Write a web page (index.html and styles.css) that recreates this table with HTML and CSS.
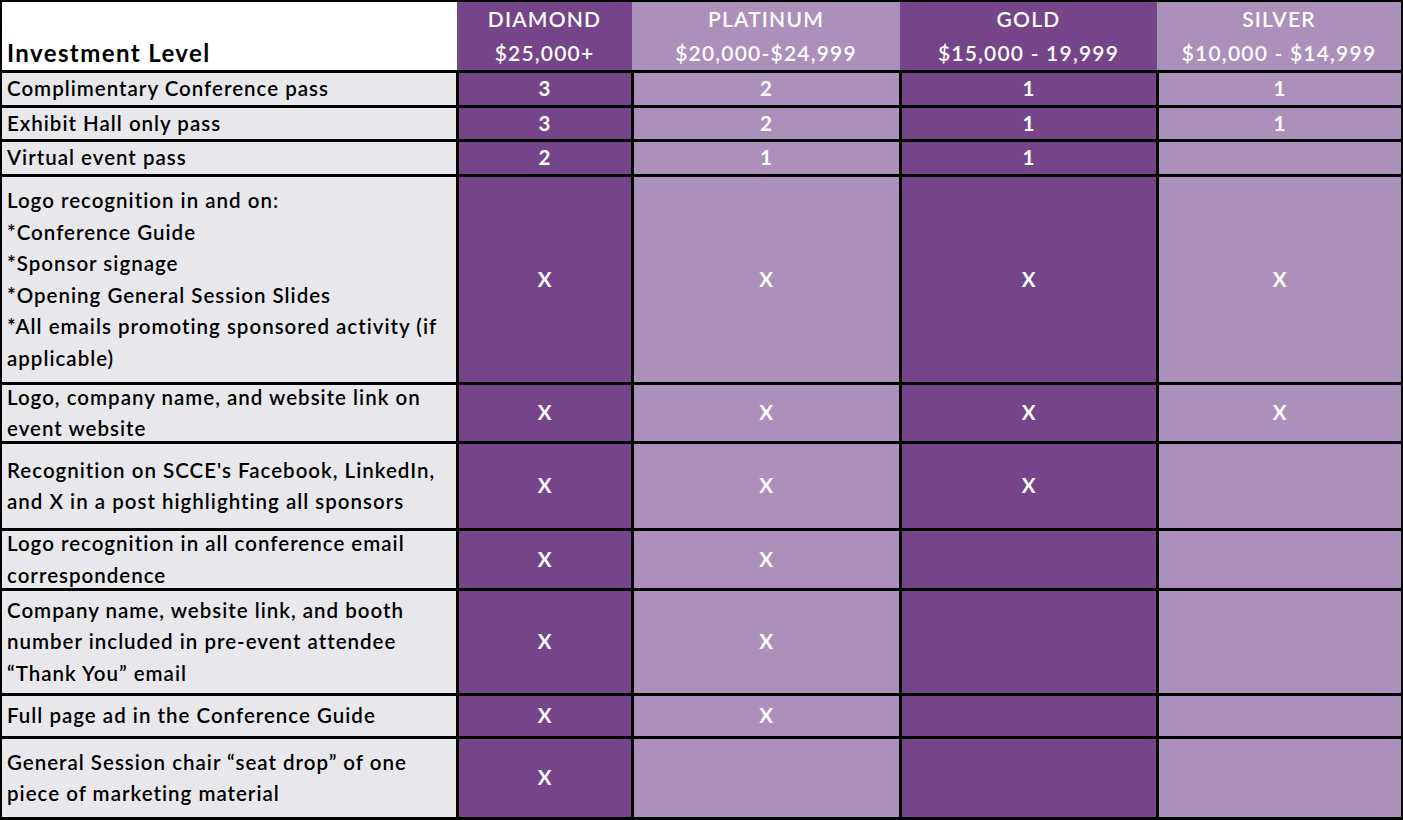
FILE: index.html
```html
<!DOCTYPE html>
<html lang="en">
<head>
<meta charset="utf-8">
<title>Sponsorship Levels</title>
<link rel="stylesheet" href="styles.css">
</head>
<body>
<div class="sheet">
  <div class="row head">
    <div class="cell title">Investment Level</div>
    <div class="cell tier dark"><span>DIAMOND</span><span>$25,000+</span></div>
    <div class="cell tier light"><span>PLATINUM</span><span>$20,000-$24,999</span></div>
    <div class="cell tier dark"><span>GOLD</span><span>$15,000 - 19,999</span></div>
    <div class="cell tier light"><span>SILVER</span><span>$10,000 - $14,999</span></div>
  </div>

  <div class="row h32">
    <div class="cell label">Complimentary Conference pass</div>
    <div class="cell val dark">3</div>
    <div class="cell val light">2</div>
    <div class="cell val dark">1</div>
    <div class="cell val light">1</div>
  </div>

  <div class="row h31">
    <div class="cell label">Exhibit Hall only pass</div>
    <div class="cell val dark">3</div>
    <div class="cell val light">2</div>
    <div class="cell val dark">1</div>
    <div class="cell val light">1</div>
  </div>

  <div class="row h32">
    <div class="cell label">Virtual event pass</div>
    <div class="cell val dark">2</div>
    <div class="cell val light">1</div>
    <div class="cell val dark">1</div>
    <div class="cell val light"></div>
  </div>

  <div class="row h205">
    <div class="cell label">Logo recognition in and on:<br>*Conference Guide<br>*Sponsor signage<br>*Opening General Session Slides<br>*All emails promoting sponsored activity (if<br>applicable)</div>
    <div class="cell val dark">X</div>
    <div class="cell val light">X</div>
    <div class="cell val dark">X</div>
    <div class="cell val light">X</div>
  </div>

  <div class="row h56">
    <div class="cell label">Logo, company name, and website link on<br>event website</div>
    <div class="cell val dark">X</div>
    <div class="cell val light">X</div>
    <div class="cell val dark">X</div>
    <div class="cell val light">X</div>
  </div>

  <div class="row h84">
    <div class="cell label">Recognition on SCCE's Facebook, LinkedIn,<br>and X in a post highlighting all sponsors</div>
    <div class="cell val dark">X</div>
    <div class="cell val light">X</div>
    <div class="cell val dark">X</div>
    <div class="cell val light"></div>
  </div>

  <div class="row h57">
    <div class="cell label">Logo recognition in all conference email<br>correspondence</div>
    <div class="cell val dark">X</div>
    <div class="cell val light">X</div>
    <div class="cell val dark"></div>
    <div class="cell val light"></div>
  </div>

  <div class="row h102">
    <div class="cell label">Company name, website link, and booth<br>number included in pre-event attendee<br>“Thank You” email</div>
    <div class="cell val dark">X</div>
    <div class="cell val light">X</div>
    <div class="cell val dark"></div>
    <div class="cell val light"></div>
  </div>

  <div class="row h40">
    <div class="cell label">Full page ad in the Conference Guide</div>
    <div class="cell val dark">X</div>
    <div class="cell val light">X</div>
    <div class="cell val dark"></div>
    <div class="cell val light"></div>
  </div>

  <div class="row h78">
    <div class="cell label">General Session chair “seat drop” of one<br>piece of marketing material</div>
    <div class="cell val dark">X</div>
    <div class="cell val light"></div>
    <div class="cell val dark"></div>
    <div class="cell val light"></div>
  </div>
</div>
</body>
</html>
```

FILE: styles.css
```css
html, body {
  margin: 0;
  padding: 0;
  background: #ffffff;
}

body {
  font-family: "Lato", "Liberation Sans", sans-serif;
  font-size: 20.5px;
  font-weight: 600;
  color: #000000;
}

.sheet {
  width: 1403px;
  height: 820px;
  box-sizing: border-box;
  border: 2px solid #000000;
  border-bottom-width: 3px;
  background: #000000;
  overflow: hidden;
}

.row {
  display: grid;
  grid-template-columns: 454px 172px 265px 254px 242px;
  grid-template-rows: minmax(0, 1fr);
  column-gap: 3px;
  margin-top: 3px;
}

.row.head {
  grid-template-columns: 455px 175px 268px 257px 244px;
  column-gap: 0;
  margin-top: 0;
  height: 68px;
}

.h31 { height: 31px; }
.h32 { height: 32px; }
.h40 { height: 40px; }
.h56 { height: 56px; }
.h57 { height: 57px; }
.h78 { height: 78px; }
.h84 { height: 84px; }
.h102 { height: 102px; }
.h205 { height: 205px; }

.cell {
  display: flex;
  align-items: center;
  min-width: 0;
  min-height: 0;
  overflow: hidden;
  line-height: 31.5px;
  white-space: nowrap;
  letter-spacing: 1px;
}

.dark {
  background: #764488;
  color: #ffffff;
}

.light {
  background: #ab90bb;
  color: #ffffff;
}

.label {
  background: #e8e8ec;
  padding-left: 5px;
}

.val {
  justify-content: center;
  font-weight: 700;
}

.title {
  background: #ffffff;
  align-items: flex-end;
  padding-left: 5px;
  padding-bottom: 2px;
  font-size: 24px;
  font-weight: 700;
  line-height: 30px;
  letter-spacing: 1.4px;
}

.tier {
  flex-direction: column;
  justify-content: flex-end;
  align-items: center;
  padding-bottom: 0;
  font-size: 21px;
  line-height: 34px;
  letter-spacing: 1.2px;
}
```
